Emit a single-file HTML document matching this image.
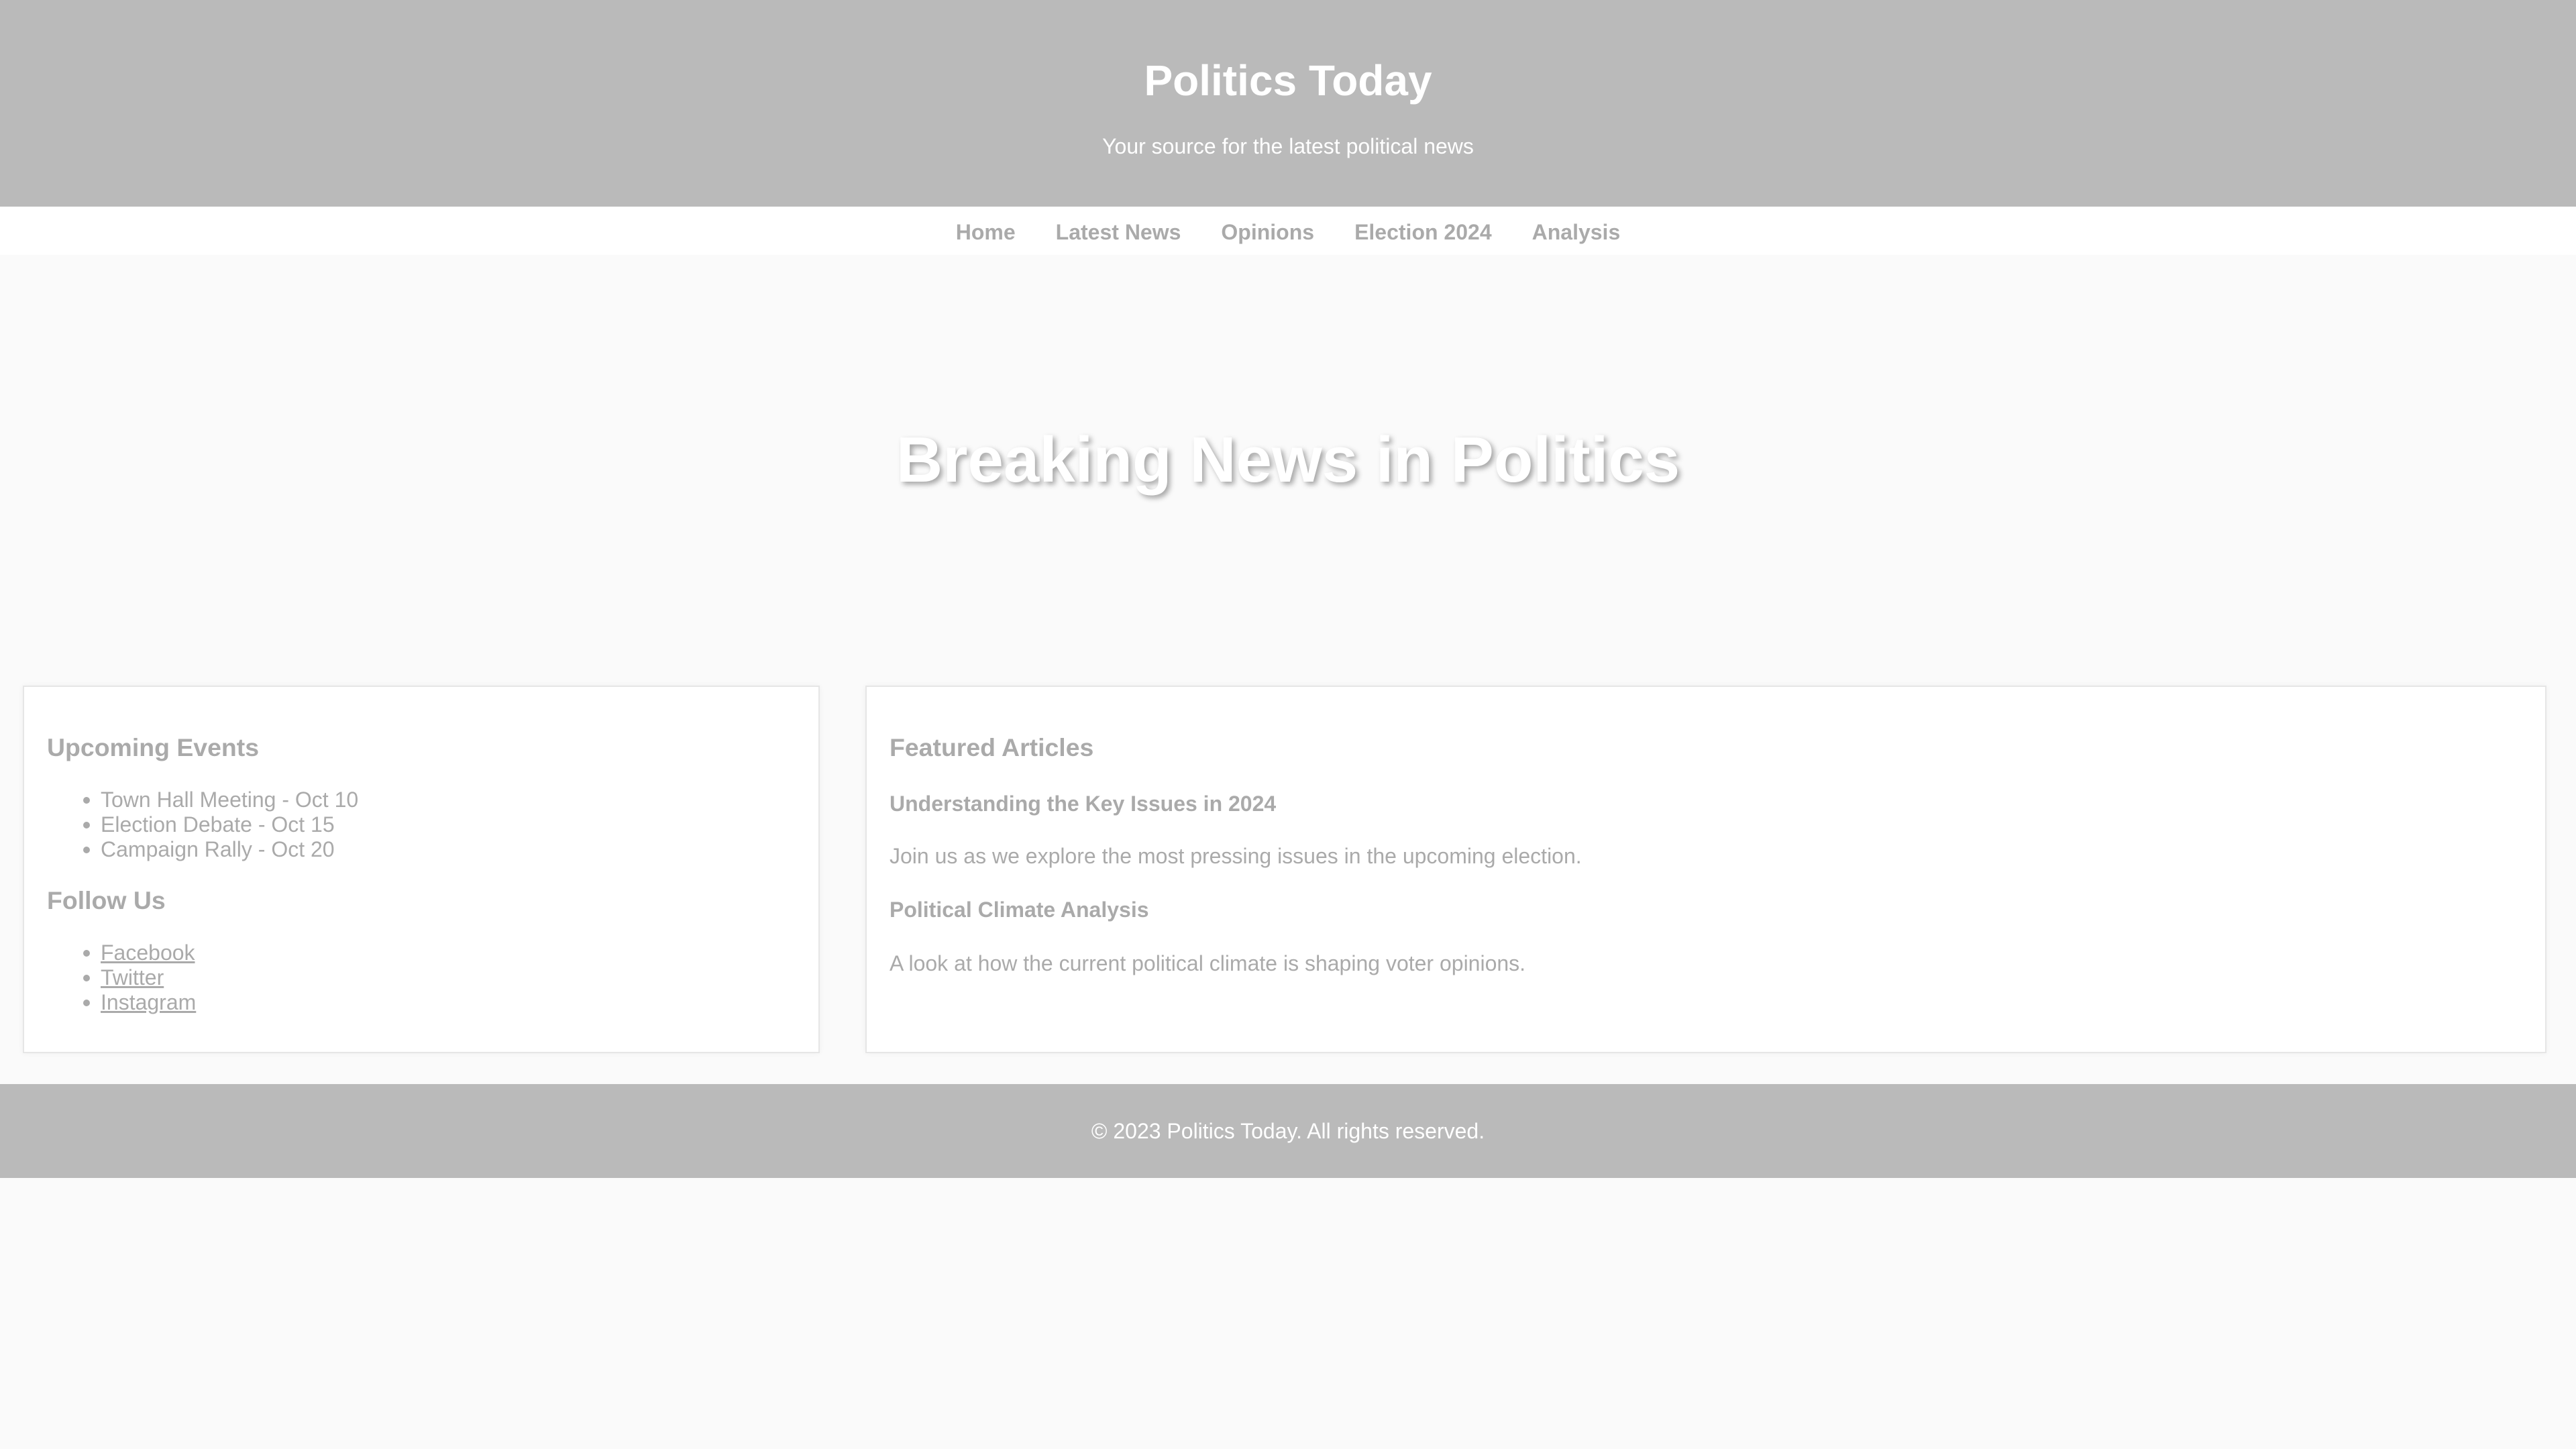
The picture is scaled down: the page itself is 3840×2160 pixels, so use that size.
<!DOCTYPE html>
<html><head><meta charset="utf-8">
<style>
html,body{margin:0;padding:0;}
body{width:1920px;height:1080px;zoom:2;background:#fafafa;font-family:"Liberation Sans",Arial,sans-serif;position:relative;overflow:hidden;color:#aaa;}
header{position:absolute;left:0;top:0;width:1920px;height:154px;background:#bababa;color:#fff;text-align:center;}
header h1{position:absolute;left:0;right:0;top:41px;margin:0;font-size:32px;line-height:38px;font-weight:bold;}
header p{position:absolute;left:0;right:0;top:100px;margin:0;font-size:16px;line-height:18px;}
nav{position:absolute;left:0;top:154px;width:1920px;height:36px;background:#fff;text-align:center;}
nav a{display:inline-block;margin:0 15px;font-size:16px;font-weight:bold;color:#aaa;text-decoration:none;line-height:18px;margin-top:10px;}
.hero{position:absolute;left:0;right:0;top:316px;text-align:center;font-size:48px;font-weight:bold;line-height:54px;color:#fff;text-shadow:2px 2px 4px rgba(0,0,0,0.35);}
.card{position:absolute;top:511px;height:272px;background:#fff;border:1px solid #e6e6e6;box-shadow:0 0 4px rgba(0,0,0,0.05);}
.t{position:absolute;white-space:nowrap;}
h2{margin:0;font-size:18.72px;font-weight:bold;line-height:24px;}
.li{font-size:16px;line-height:18px;}
.li:before{content:"";position:absolute;left:-13px;top:7px;width:5px;height:5px;border-radius:50%;background:#aaa;}
.li a{color:#aaa;text-decoration:underline;}
.b{font-size:16px;font-weight:bold;line-height:18px;}
.p{font-size:16px;line-height:18px;}
footer{position:absolute;left:0;top:808px;width:1920px;height:70px;background:#bababa;color:#fff;text-align:center;font-size:16px;line-height:70px;}
</style></head><body>
<header><h1>Politics Today</h1><p>Your source for the latest political news</p></header>
<nav><a>Home</a><a>Latest News</a><a>Opinions</a><a>Election 2024</a><a>Analysis</a></nav>
<div class="hero">Breaking News in Politics</div>
<div class="card" style="left:17px;width:592px;">
 <h2 class="t" style="left:17px;top:33px;">Upcoming Events</h2>
 <div class="t li" style="left:57px;top:75px;">Town Hall Meeting - Oct 10</div>
 <div class="t li" style="left:57px;top:93.5px;">Election Debate - Oct 15</div>
 <div class="t li" style="left:57px;top:112px;">Campaign Rally - Oct 20</div>
 <h2 class="t" style="left:17px;top:147px;">Follow Us</h2>
 <div class="t li" style="left:57px;top:189px;"><a>Facebook</a></div>
 <div class="t li" style="left:57px;top:207.5px;"><a>Twitter</a></div>
 <div class="t li" style="left:57px;top:226px;"><a>Instagram</a></div>
</div>
<div class="card" style="left:645px;width:1251px;">
 <h2 class="t" style="left:17px;top:33px;">Featured Articles</h2>
 <div class="t b" style="left:17px;top:78px;">Understanding the Key Issues in 2024</div>
 <div class="t p" style="left:17px;top:117px;">Join us as we explore the most pressing issues in the upcoming election.</div>
 <div class="t b" style="left:17px;top:157px;">Political Climate Analysis</div>
 <div class="t p" style="left:17px;top:197px;">A look at how the current political climate is shaping voter opinions.</div>
</div>
<footer>© 2023 Politics Today. All rights reserved.</footer>
</body></html>
